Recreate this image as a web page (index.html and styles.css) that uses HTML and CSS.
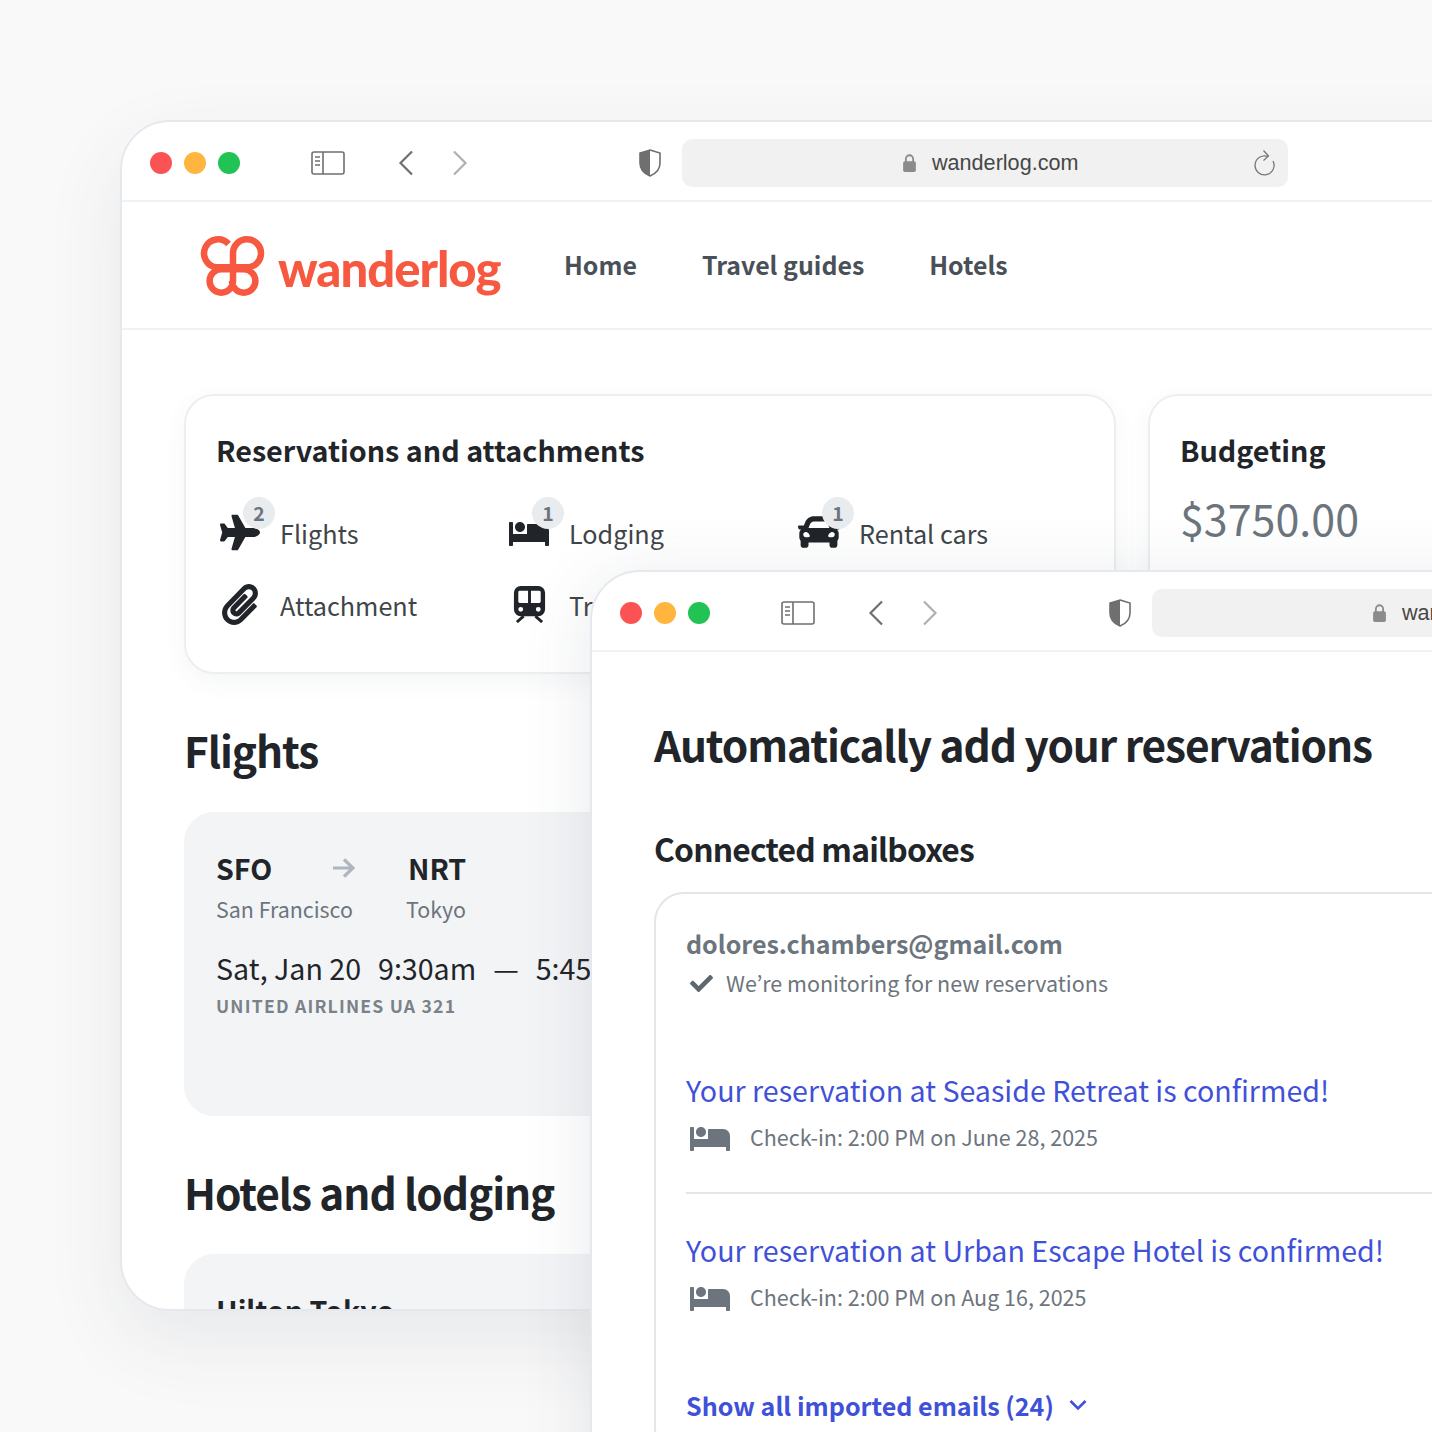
FILE: index.html
```html
<!DOCTYPE html>
<html lang="en">
<head>
    <meta charset="UTF-8">
    <title>Wanderlog</title>
    <link rel="stylesheet" href="styles.css">
</head>
<body>
    <svg class="defs" width="0" height="0">
        <symbol id="i-sidebar" viewBox="0 0 34 24">
            <rect x="1" y="1" width="32" height="22" rx="2" fill="none" stroke="currentColor" stroke-width="1.6"/>
            <path d="M12 1v22M4 6h5M4 10h5M4 14h5" fill="none" stroke="currentColor" stroke-width="1.6"/>
        </symbol>
        <symbol id="i-shield" viewBox="0 0 22 28">
            <path d="M11 1 L21 4 V14 C21 21 16 25 11 27 C6 25 1 21 1 14 V4 Z" fill="none" stroke="currentColor" stroke-width="1.6"/>
            <path d="M11 1 V27 C6 25 1 21 1 14 V4 Z" fill="currentColor"/>
        </symbol>
        <symbol id="i-bed" viewBox="0 0 640 512">
            <path d="M176 256c44.11 0 80-35.89 80-80s-35.89-80-80-80-80 35.89-80 80 35.89 80 80 80zm352-128H304c-8.84 0-16 7.16-16 16v144H64V112c0-8.84-7.16-16-16-16H16c-8.84 0-16 7.16-16 16v352c0 8.84 7.16 16 16 16h32c8.84 0 16-7.16 16-16v-48h512v48c0 8.84 7.16 16 16 16h32c8.84 0 16-7.16 16-16V240c0-61.86-50.14-112-112-112z" fill="currentColor"/>
        </symbol>
    </svg>

    <!-- back window -->
    <div class="window window-back">
        <div class="toolbar">
            <div class="lights"><span class="light red"></span><span class="light yellow"></span><span class="light green"></span></div>
            <svg class="sidebar-icon"><use href="#i-sidebar"/></svg>
            <svg class="chevron" viewBox="0 0 16 26"><path d="M14 1.5 2.5 13 14 24.5" fill="none" stroke="currentColor" stroke-width="2.2"/></svg>
            <svg class="chevron chevron-off" viewBox="0 0 16 26"><path d="M2 1.5 13.5 13 2 24.5" fill="none" stroke="currentColor" stroke-width="2.2"/></svg>
            <svg class="shield"><use href="#i-shield"/></svg>
            <div class="urlbar">
                <svg class="lock" viewBox="0 0 16 22"><path d="M4 10V6.500a4 4 0 0 1 8 0V10" fill="none" stroke="currentColor" stroke-width="2"/><rect x="1" y="9" width="14" height="12" rx="2" fill="currentColor"/></svg>
                <span class="url">wanderlog.com</span>
                <svg class="reload" viewBox="0 0 22 28"><path d="M14 7.500A9.500 9.500 0 1 0 19 12" fill="none" stroke="currentColor" stroke-width="1.3"/><path d="M9.500 1.500 14.500 7 9.500 11.500" fill="none" stroke="currentColor" stroke-width="1.3"/></svg>
            </div>
        </div>
        <div class="site-nav">
            <svg class="logo" viewBox="0 0 64 60"><path d="M28.500 8A14 14 0 1 0 17 31.300H47A14 14 0 1 0 33 17.300V45A11.700 11.700 0 1 1 21.300 33.300H43.700A11.700 11.700 0 1 1 32 45" fill="none" stroke="#f75940" stroke-width="6.500"/></svg>
            <span class="logo-text">wanderlog</span>
            <a class="nav-link nav-home">Home</a>
            <a class="nav-link nav-guides">Travel guides</a>
            <a class="nav-link">Hotels</a>
        </div>
        <div class="trip">
            <div class="card-row">
                <div class="card card-res">
                    <h3 class="card-title">Reservations and attachments</h3>
                    <div class="res-grid">
                        <div class="res-item">
                            <span class="res-icon"><svg class="ic-plane" viewBox="0 0 576 512"><path d="M480 192H365.710L260.610 8.060A16.014 16.014 0 0 0 246.710 0h-65.500c-10.630 0-18.300 10.170-15.380 20.390L214.860 192H112l-43.200-57.600c-3.020-4.030-7.770-6.400-12.800-6.400H16.010C5.600 128-2.040 137.780.490 147.880L32 256 .490 364.120C-2.040 374.220 5.600 384 16.010 384H56c5.040 0 9.780-2.370 12.800-6.400L112 320h102.860l-49.030 171.600c-2.920 10.220 4.750 20.400 15.380 20.400h65.500c5.740 0 11.040-3.080 13.890-8.060L365.710 320H480c35.350 0 96-28.650 96-64s-60.650-64-96-64z" fill="currentColor"/></svg><span class="count">2</span></span>
                            <span>Flights</span>
                        </div>
                        <div class="res-item">
                            <span class="res-icon"><svg class="ic-bed"><use href="#i-bed"/></svg><span class="count">1</span></span>
                            <span>Lodging</span>
                        </div>
                        <div class="res-item">
                            <span class="res-icon"><svg class="ic-car" viewBox="0 0 512 512"><path d="M499.990 176h-59.870l-16.640-41.600C406.380 91.630 365.570 64 319.500 64h-127c-46.060 0-86.880 27.630-103.990 70.400L71.870 176H12.010C4.200 176-1.530 183.340.370 190.910l6 24C7.700 220.250 12.500 224 18.010 224h20.070C24.650 235.730 16 252.780 16 272v48c0 16.120 6.160 30.670 16 41.930V416c0 17.670 14.330 32 32 32h32c17.670 0 32-14.330 32-32v-32h256v32c0 17.670 14.330 32 32 32h32c17.670 0 32-14.330 32-32v-54.070c9.840-11.250 16-25.800 16-41.930v-48c0-19.220-8.650-36.270-22.070-48H494c5.510 0 10.310-3.750 11.640-9.090l6-24c1.890-7.570-3.840-14.910-11.650-14.910zm-352.060-17.830c7.290-18.220 24.940-30.170 44.570-30.170h127c19.630 0 37.280 11.950 44.570 30.170L384 208H128l19.930-49.830zM96 319.800c-19.200 0-32-12.760-32-31.900S76.800 256 96 256s48 28.710 48 47.850-28.800 15.950-48 15.950zm320 0c-19.200 0-48 3.190-48-15.950S396.800 256 416 256s32 12.760 32 31.900-12.800 31.900-32 31.900z" fill="currentColor"/></svg><span class="count">1</span></span>
                            <span>Rental cars</span>
                        </div>
                        <div class="res-item">
                            <span class="res-icon"><svg class="ic-clip" viewBox="0 0 448 512"><path d="M43.246 466.142c-58.430-60.289-57.341-157.511 1.386-217.581L254.392 34c44.316-45.332 116.351-45.336 160.671 0 43.890 44.894 43.943 117.329 0 162.276L232.214 383.128c-29.855 30.537-78.633 30.111-107.982-.998-28.275-29.970-27.368-77.473 1.452-106.953l143.743-146.835c6.182-6.314 16.312-6.422 22.626-.241l22.861 22.379c6.315 6.182 6.422 16.312.241 22.626L171.427 319.927c-4.932 5.045-5.236 13.428-.648 18.292 4.372 4.634 11.245 4.711 15.688.165l182.849-186.851c19.613-20.062 19.613-52.725-.011-72.798-19.189-19.627-49.957-19.637-69.154 0L90.390 293.295c-34.763 35.560-35.299 93.120-1.191 128.313 34.010 35.093 88.985 35.137 123.058.286l172.060-175.999c6.177-6.319 16.307-6.433 22.626-.256l22.877 22.364c6.319 6.177 6.434 16.307.256 22.626l-172.060 175.998c-59.576 60.938-155.943 60.216-214.770-.485z" fill="currentColor"/></svg></span>
                            <span>Attachment</span>
                        </div>
                        <div class="res-item">
                            <span class="res-icon"><svg class="ic-train" viewBox="0 0 32 38"><path fill-rule="evenodd" d="M7 0H25A7 7 0 0 1 32 7V24A7 7 0 0 1 25 31H7A7 7 0 0 1 0 24V7A7 7 0 0 1 7 0ZM6 5A1.500 1.500 0 0 0 4.500 6.500V16A1.500 1.500 0 0 0 6 17.500H14.500V5ZM17.500 5V17.500H26A1.500 1.500 0 0 0 27.500 16V6.500A1.500 1.500 0 0 0 26 5ZM7 21.500A2.500 2.500 0 1 0 7 26.500 2.500 2.500 0 0 0 7 21.500ZM25 21.500A2.500 2.500 0 1 0 25 26.500 2.500 2.500 0 0 0 25 21.500Z" fill="currentColor"/><path d="M10 31 3 37M22 31 29 37" fill="none" stroke="currentColor" stroke-width="3"/></svg></span>
                            <span>Train</span>
                        </div>
                    </div>
                </div>
                <div class="card card-budget">
                    <h3 class="card-title">Budgeting</h3>
                    <div class="budget-value">$3750.00</div>
                </div>
            </div>

            <h2 class="section-title">Flights</h2>
            <div class="panel panel-flight">
                <div class="route">
                    <div class="route-col">
                        <strong class="code">SFO</strong>
                        <span class="city">San Francisco</span>
                    </div>
                    <svg class="arrow" viewBox="0 0 22 20"><path d="M0 10H20M11 1.500 20 10 11 18.500" fill="none" stroke="currentColor" stroke-width="3.200"/></svg>
                    <div class="route-col route-to">
                        <strong class="code code-to">NRT</strong>
                        <span class="city">Tokyo</span>
                    </div>
                </div>
                <div class="times"><span>Sat, Jan 20</span><span>9:30am</span><span>—</span><span>5:45pm</span></div>
                <div class="airline">UNITED AIRLINES UA 321</div>
            </div>

            <h2 class="section-title section-hotels">Hotels and lodging</h2>
            <div class="panel panel-hotel">
                <strong class="code">Hilton Tokyo</strong>
            </div>
        </div>
    </div>

    <!-- front window -->
    <div class="window window-front">
        <div class="toolbar">
            <div class="lights"><span class="light red"></span><span class="light yellow"></span><span class="light green"></span></div>
            <svg class="sidebar-icon"><use href="#i-sidebar"/></svg>
            <svg class="chevron" viewBox="0 0 16 26"><path d="M14 1.500 2.500 13 14 24.500" fill="none" stroke="currentColor" stroke-width="2.200"/></svg>
            <svg class="chevron chevron-off" viewBox="0 0 16 26"><path d="M2 1.500 13.500 13 2 24.500" fill="none" stroke="currentColor" stroke-width="2.200"/></svg>
            <svg class="shield"><use href="#i-shield"/></svg>
            <div class="urlbar">
                <svg class="lock" viewBox="0 0 16 22"><path d="M4 10V6.500a4 4 0 0 1 8 0V10" fill="none" stroke="currentColor" stroke-width="2"/><rect x="1" y="9" width="14" height="12" rx="2" fill="currentColor"/></svg>
                <span class="url">wanderlog.com</span>
            </div>
        </div>
        <div class="import">
            <h2 class="section-title import-title">Automatically add your reservations</h2>
            <h3 class="mail-heading">Connected mailboxes</h3>
            <div class="mail-card">
                <div class="mail-address">dolores.chambers@gmail.com</div>
                <div class="mail-status">
                    <svg class="ic-check" viewBox="0 0 512 512"><path d="M173.898 439.404l-166.400-166.400c-9.997-9.997-9.997-26.206 0-36.204l36.203-36.204c9.997-9.998 26.207-9.998 36.204 0L192 312.690 432.095 72.596c9.997-9.997 26.207-9.997 36.204 0l36.203 36.204c9.997 9.997 9.997 26.206 0 36.204l-294.400 294.401c-9.998 9.997-26.207 9.997-36.204-.001z" fill="currentColor"/></svg>
                    <span>We’re monitoring for new reservations</span>
                </div>
                <div class="mail-item">
                    <a class="mail-link">Your reservation at Seaside Retreat is confirmed!</a>
                    <div class="mail-meta"><svg class="ic-bed-small"><use href="#i-bed"/></svg><span>Check-in: 2:00 PM on June 28, 2025</span></div>
                </div>
                <div class="mail-item mail-item-last">
                    <a class="mail-link">Your reservation at Urban Escape Hotel is confirmed!</a>
                    <div class="mail-meta"><svg class="ic-bed-small"><use href="#i-bed"/></svg><span>Check-in: 2:00 PM on Aug 16, 2025</span></div>
                </div>
                <div class="show-all">
                    <span>Show all imported emails (24)</span>
                    <svg class="ic-down" viewBox="0 0 18 12"><path d="M1.500 2 9 9.500 16.500 2" fill="none" stroke="currentColor" stroke-width="2.600"/></svg>
                </div>
            </div>
        </div>
    </div>
</body>
</html>
```

FILE: styles.css
```css
* {
    box-sizing: border-box;
}
html, body {
    margin: 0;
    height: 1432px;
    overflow: hidden;
}
body {
    position: relative;
    background-color: #f9f9f9;
    color: #212529;
    font-family: "Noto Sans CJK JP", "Source Sans Pro", "Open Sans", sans-serif;
}
h2, h3 {
    margin: 0;
}
.defs {
    position: absolute;
}

/* windows */
.window {
    position: absolute;
    width: 1500px;
    background-color: #fff;
    border: 2px solid #e6e8ee;
    border-radius: 50px 0 0 50px;
    overflow: hidden;
}
.window-back {
    left: 120px;
    top: 120px;
    height: 1191px;
    box-shadow: 0 30px 80px rgba(60, 70, 90, 0.09);
}
.window-front {
    left: 590px;
    top: 570px;
    height: 1000px;
    box-shadow: 0 10px 70px rgba(60, 70, 90, 0.12);
}
.toolbar {
    display: flex;
    align-items: center;
    height: 80px;
    padding-left: 28px;
    padding-top: 4px;
    border-bottom: 2px solid #f0f1f3;
    color: #6f6f6f;
}
.lights {
    display: flex;
    gap: 12px;
    margin-right: 71px;
}
.light {
    width: 22px;
    height: 22px;
    border-radius: 50%;
}
.red { background-color: #fb5254; }
.yellow { background-color: #ffb53e; }
.green { background-color: #21c355; }
.sidebar-icon {
    width: 34px;
    height: 24px;
    margin-right: 53px;
}
.chevron {
    width: 16px;
    height: 26px;
    margin-right: 38px;
}
.chevron-off {
    color: #b0b0b0;
    margin-right: 0;
}
.shield {
    width: 22px;
    height: 28px;
    margin-left: 171px;
    margin-right: 21px;
}
.urlbar {
    display: flex;
    align-items: center;
    flex: none;
    width: 606px;
    height: 48px;
    padding-left: 220px;
    border-radius: 10px;
    background-color: #f1f1f1;
    position: relative;
}
.lock {
    width: 15px;
    height: 20px;
    color: #8b8b8b;
    margin-right: 15px;
}
.url {
    font-family: "Liberation Sans", Arial, sans-serif;
    font-size: 21.6px;
    line-height: 52px;
    color: #474747;
}
.reload {
    position: absolute;
    right: 12px;
    top: 10px;
    width: 22px;
    height: 28px;
    color: #777;
}

/* site nav */
.site-nav {
    display: flex;
    align-items: center;
    height: 128px;
    padding-left: 78px;
    border-bottom: 2px solid #f0f1f3;
}
.logo {
    width: 64px;
    height: 60px;
    overflow: visible;
    margin-top: 2px;
    margin-right: 14px;
}
.logo-text {
    width: 222px;
    margin-top: 5px;
    margin-right: 64px;
    font-family: Lato, sans-serif;
    font-weight: 900;
    font-size: 49px;
    line-height: 60px;
    letter-spacing: -1px;
    color: #f75940;
    white-space: nowrap;
}
.nav-link {
    margin-top: -2px;
    font-size: 24.9px;
    font-weight: 700;
    line-height: 40px;
    color: #495057;
}
.nav-home { margin-right: 65px; }
.nav-guides { margin-right: 65px; }

/* trip */
.trip {
    padding: 64px 0 0 62px;
}
.card-row {
    display: flex;
    gap: 32px;
}
.card {
    height: 280px;
    padding: 32px 30px;
    border: 2px solid #eceef1;
    border-radius: 30px;
    box-shadow: 0 8px 24px rgba(60, 70, 90, 0.05);
}
.card-res {
    width: 932px;
}
.card-budget {
    width: 400px;
}
.card-title {
    font-size: 28.7px;
    font-weight: 700;
    line-height: 44px;
    color: #212529;
}
.res-grid {
    display: grid;
    grid-template-columns: 289px 290px 290px;
    grid-auto-rows: 72px;
    margin-top: 25px;
    margin-left: 1px;
}
.res-item {
    display: flex;
    align-items: center;
    height: 72px;
    font-size: 25.2px;
    color: #3f4549;
}
.res-icon {
    position: relative;
    display: flex;
    align-items: center;
    justify-content: center;
    width: 46px;
    height: 42px;
    margin-top: -2px;
    margin-right: 17px;
    color: #212529;
}
.ic-plane { width: 40px; height: 37px; }
.ic-bed { width: 40px; height: 32px; }
.ic-car { width: 42px; height: 42px; }
.ic-clip { width: 36px; height: 41px; }
.ic-train { width: 33px; height: 37px; }
.count {
    position: absolute;
    left: 26px;
    top: -14px;
    width: 32px;
    height: 32px;
    border-radius: 50%;
    background-color: #e9ecef;
    color: #6c757d;
    font-size: 19.5px;
    font-weight: 700;
    line-height: 32px;
    text-align: center;
}
.budget-value {
    margin-top: 15px;
    font-size: 43px;
    line-height: 60px;
    color: #6c757d;
}

/* sections */
.section-title {
    font-size: 42.4px;
    font-weight: 700;
    line-height: 60px;
    letter-spacing: -1.1px;
    color: #212529;
}
.trip > .section-title {
    margin-top: 46px;
}
.panel {
    margin-top: 32px;
    width: 600px;
    padding: 35px 32px;
    border-radius: 30px;
    background-color: #f3f4f6;
}
.panel-flight {
    height: 304px;
}
.panel-hotel {
    height: 200px;
}
.route {
    display: flex;
    align-items: flex-start;
}
.route-col {
    display: flex;
    flex-direction: column;
    width: 137px;
    white-space: nowrap;
}
.route-to {
    margin-left: 31px;
}
.code-to {
    margin-left: 2px;
}
.arrow {
    width: 22px;
    height: 20px;
    margin-top: 11px;
    margin-left: -20px;
    margin-right: 20px;
    color: #adb5bd;
}
.code {
    font-size: 28.6px;
    font-weight: 700;
    line-height: 42px;
    color: #212529;
}
.city {
    margin-top: 1px;
    font-size: 21.4px;
    line-height: 38px;
    color: #6c757d;
}
.times {
    display: flex;
    gap: 17px;
    margin-top: 19px;
    font-size: 28.6px;
    line-height: 42px;
    white-space: nowrap;
}
.airline {
    margin-top: 3px;
    font-size: 17.6px;
    font-weight: 700;
    line-height: 28px;
    letter-spacing: 1.2px;
    color: #7a8289;
}

/* import window */
.import {
    padding: 62px 0 0 62px;
}
.mail-heading {
    margin-top: 50px;
    font-size: 31.8px;
    font-weight: 700;
    line-height: 48px;
    letter-spacing: -0.8px;
    color: #212529;
}
.mail-card {
    width: 900px;
    margin-top: 20px;
    padding: 29px 30px 30px;
    border: 2px solid #e3e5e8;
    border-radius: 30px;
}
.mail-address {
    font-size: 25px;
    font-weight: 700;
    line-height: 40px;
    color: #6c757d;
}
.mail-status {
    display: flex;
    align-items: center;
    margin-top: 2px;
    padding-left: 4px;
    font-size: 21.5px;
    line-height: 36px;
    color: #6c757d;
}
.ic-check {
    width: 23px;
    height: 23px;
    margin-right: 13px;
    color: #5f676e;
}
.mail-item {
    padding-bottom: 37px;
    border-bottom: 2px solid #e3e5e8;
    margin-top: 66px;
}
.mail-item + .mail-item {
    margin-top: 33px;
}
.mail-item-last {
    border-bottom: 0;
}
.mail-link {
    display: block;
    font-size: 28.6px;
    line-height: 46px;
    color: #3f51d8;
    white-space: nowrap;
}
.mail-meta {
    display: flex;
    align-items: center;
    margin-top: 6px;
    padding-left: 4px;
    font-size: 21.5px;
    line-height: 36px;
    color: #6c757d;
}
.ic-bed-small {
    width: 40px;
    height: 32px;
    margin-right: 20px;
    color: #6c757d;
}
.show-all {
    display: flex;
    align-items: center;
    gap: 15px;
    margin-top: 33px;
    font-size: 25.1px;
    font-weight: 700;
    line-height: 40px;
    color: #3f51d8;
}
.ic-down {
    width: 18px;
    height: 12px;
}
```
